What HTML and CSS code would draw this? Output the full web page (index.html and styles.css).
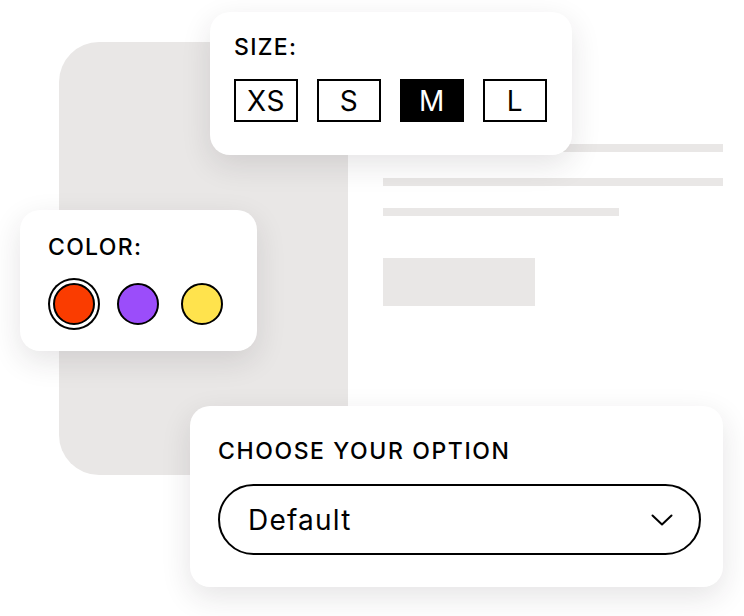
FILE: index.html
```html
<!DOCTYPE html>
<html lang="en">
<head>
    <meta charset="UTF-8">
    <meta name="viewport" content="width=device-width, initial-scale=1.0">
    <title>Product Options</title>
    <link rel="stylesheet" href="styles.css">
</head>
<body>
    <div class="stage">
        <div class="product">
            <div class="product-image"></div>
            <div class="product-info">
                <div class="line line-full"></div>
                <div class="line line-full"></div>
                <div class="line line-short"></div>
                <div class="fake-button"></div>
            </div>
        </div>

        <div class="card size-card">
            <div class="card-label">SIZE:</div>
            <div class="size-list">
                <div class="size-box">XS</div>
                <div class="size-box">S</div>
                <div class="size-box active">M</div>
                <div class="size-box">L</div>
            </div>
        </div>

        <div class="card color-card">
            <div class="card-label">COLOR:</div>
            <div class="swatches">
                <span class="swatch red selected"></span>
                <span class="swatch purple"></span>
                <span class="swatch yellow"></span>
            </div>
        </div>

        <div class="card option-card">
            <div class="card-label">CHOOSE YOUR OPTION</div>
            <div class="select">
                <span class="select-value">Default</span>
                <svg class="chevron" width="22" height="12" viewBox="0 0 22 12" fill="none">
                    <polyline points="1.5,1.5 11,10.5 20.5,1.5" stroke="#000" stroke-width="2" stroke-linecap="round" stroke-linejoin="round"/>
                </svg>
            </div>
        </div>
    </div>
</body>
</html>
```

FILE: styles.css
```css
body {
    margin: 0;
    background: #fff;
    font-family: Inter, "Noto Sans", sans-serif;
    color: #000;
}

.stage {
    position: relative;
    width: 744px;
    height: 616px;
    overflow: hidden;
}

/* product mock in the background */
.product {
    display: flex;
    padding: 42px 0 0 59px;
}

.product-image {
    width: 289px;
    height: 433px;
    background: #e9e7e6;
    border-radius: 40px 0 0 40px;
}

.product-info {
    display: flex;
    flex-direction: column;
    align-items: flex-start;
    padding: 102px 0 0 35px;
}

.line {
    height: 8px;
    background: #e9e7e6;
}

.line-full {
    width: 340px;
    margin-bottom: 26px;
}

.line-full + .line-full {
    margin-bottom: 22px;
}

.line-short {
    width: 236px;
    margin-bottom: 42px;
}

.fake-button {
    width: 152px;
    height: 48px;
    background: #e9e7e6;
}

/* floating cards */
.card {
    position: absolute;
    box-sizing: border-box;
    background: #fff;
    border-radius: 20px;
    box-shadow: 0 10px 30px rgba(40, 30, 40, 0.12);
}

.card-label {
    font-size: 23px;
    line-height: 22px;
    font-weight: 500;
    letter-spacing: 1.3px;
}

.size-card {
    left: 210px;
    top: 12px;
    width: 362px;
    padding: 24px 24px 33px;
}

.size-list {
    display: flex;
    gap: 19px;
    margin-top: 21px;
}

.size-box {
    box-sizing: border-box;
    width: 64px;
    height: 43px;
    border: 2px solid #000;
    display: flex;
    align-items: center;
    justify-content: center;
    font-size: 28px;
    letter-spacing: 0.5px;
}

.size-box.active {
    background: #000;
    color: #fff;
}

.color-card {
    left: 20px;
    top: 210px;
    width: 237px;
    padding: 26px 28px 26px;
}

.swatches {
    display: flex;
    gap: 22px;
    margin: 25px 0 0 5px;
}

.swatch {
    box-sizing: border-box;
    width: 42px;
    height: 42px;
    border-radius: 50%;
    border: 2px solid #000;
}

.swatch.selected {
    box-shadow: 0 0 0 3px #fff, 0 0 0 5px #000;
}

.red { background: #fa3c00; }
.purple { background: #9b4dfa; }
.yellow { background: #ffe34d; }

.option-card {
    left: 190px;
    top: 406px;
    width: 533px;
    padding: 34px 22px 32px 28px;
}

.option-card .card-label {
    letter-spacing: 1.6px;
}

.select {
    box-sizing: border-box;
    width: 483px;
    height: 71px;
    margin-top: 22px;
    border: 2px solid #000;
    border-radius: 36px;
    display: flex;
    align-items: center;
    justify-content: space-between;
    padding: 0 26px 0 28px;
}

.select-value {
    font-size: 28px;
    letter-spacing: 1.2px;
}
```
